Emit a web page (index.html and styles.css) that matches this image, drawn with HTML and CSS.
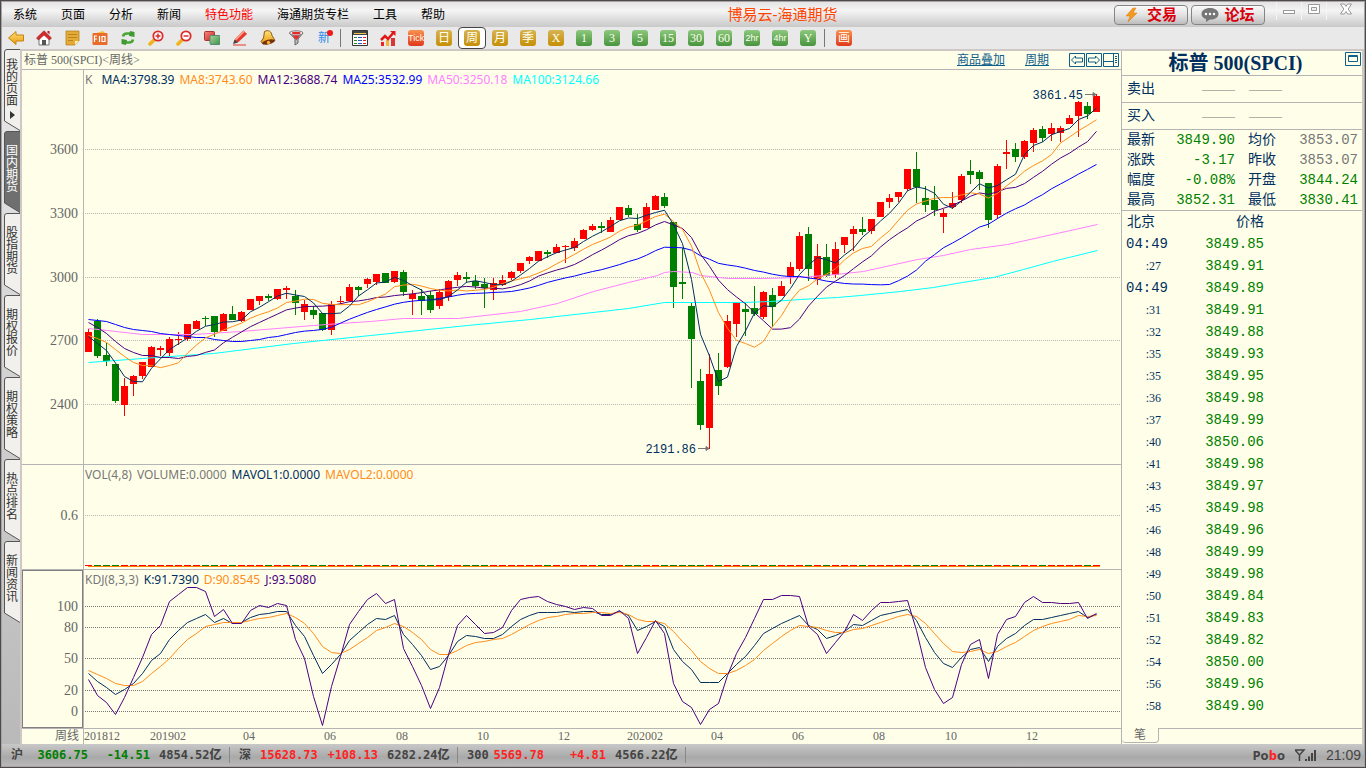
FILE: index.html
```html
<!DOCTYPE html>
<html lang="zh-CN">
<head>
<meta charset="utf-8">
<title>博易云-海通期货</title>
<link rel="stylesheet" href="styles.css">
</head>
<body>
<svg class="defs" aria-hidden="true">
  <symbol id="tab-shape" viewBox="0 0 16 82"><path d="M16 .5H3Q.5 .5 .5 3V72L16 81.5"/></symbol>
  <linearGradient id="gold" x1="0" y1="0" x2="0" y2="1"><stop offset="0" stop-color="#ffe27a"/><stop offset="1" stop-color="#e8980c"/></linearGradient>
  <linearGradient id="redg" x1="0" y1="0" x2="1" y2="1"><stop offset="0" stop-color="#f58a80"/><stop offset="1" stop-color="#c61f1c"/></linearGradient>
  <linearGradient id="greeng" x1="0" y1="0" x2="1" y2="1"><stop offset="0" stop-color="#a5d69c"/><stop offset="1" stop-color="#3f8f45"/></linearGradient>
</svg>
<div class="window">
  <header class="titlebar">
    <nav class="menu">
      <button>系统</button><button>页面</button><button>分析</button><button>新闻</button><button class="hot">特色功能</button><button>海通期货专栏</button><button>工具</button><button>帮助</button>
    </nav>
    <h1 class="app-title">博易云-海通期货</h1>
    <div class="actions">
      <button class="action"><svg width="14" height="16" viewBox="0 0 14 16"><path d="M8 1 1 9h4l-2 6 9-9H8l3-5z" fill="#f39a1e" stroke="#d87a10" stroke-width=".5"/></svg>交易</button>
      <button class="action"><svg width="18" height="14" viewBox="0 0 18 14"><path d="M9 0c5 0 8.500 2.500 8.500 6S14 11.500 9 11.500L5 14V11C2 10 .5 8.500 .5 6 .5 2.500 4 0 9 0z" fill="#777"/><g fill="#fff"><circle cx="5" cy="6" r="1.200"/><circle cx="9" cy="6" r="1.200"/><circle cx="13" cy="6" r="1.200"/></g></svg>论坛</button>
    </div>
    <div class="win-controls">
      <button aria-label="最小化"><svg width="14" height="12" viewBox="0 0 14 12"><rect x="1.500" y="7.500" width="11" height="3"/></svg></button>
      <button aria-label="还原"><svg width="14" height="12" viewBox="0 0 14 12"><path d="M1.500 1.500h11v9h-11zM4.500 4.500v3h5v-3z" fill-rule="evenodd"/></svg></button>
      <button class="close" aria-label="关闭"><svg width="14" height="12" viewBox="0 0 14 12"><path d="M1.500 1h4L7 3.500 8.500 1h4L9.200 6l3.300 5h-4L7 8.500 5.500 11h-4L4.800 6z"/></svg></button>
    </div>
  </header>

  <div class="toolbar">
    <button aria-label="后退"><svg viewBox="0 0 16 16"><path d="M.5 8 8 1.500V5h7.500v6H8v3.500z" fill="url(#gold)" stroke="#c88208"/></svg></button>
    <button aria-label="首页"><svg viewBox="0 0 16 16"><path d="M3 7v8h10V7L8 3z" fill="#fff" stroke="#777"/><path d="M.5 8 8 .8 15.500 8l-2 2L8 5 2.500 10z" fill="#d42b2b" stroke="#9c1818" stroke-width=".6"/><path d="M11.500 1h2v3.500l-2-2z" fill="#b32020"/><path d="M6 10h4v5H6z" fill="#555"/></svg></button>
    <button aria-label="便签"><svg viewBox="0 0 16 16"><path d="M2 1h13v10l-4 4H2z" fill="#e5ab36" stroke="#b07c14" stroke-width=".7"/><path d="M4 4.500h9M4 7.500h9M4 10.500h5" stroke="#b98420" fill="none"/><path d="M15 11h-4v4z" fill="#fff0b8"/></svg></button>
    <button aria-label="F10"><svg viewBox="0 0 16 16"><path d="m1 4 10-3 3 3z" fill="#f6bd3e"/><rect x=".5" y="3" width="15" height="12" rx="1" fill="#e96c2b"/><path d="M2.500 12V6H5M2.500 9H5M7.500 6v6M10 6.500h3v5h-3z" stroke="#fff" fill="none" stroke-width="1.200"/></svg></button>
    <button aria-label="刷新"><svg viewBox="0 0 16 16" fill="none" stroke="#4ba535" stroke-width="2.600"><path d="M3 6.500Q3.500 3.500 7 3.500h4"/><path d="M13 9.500Q12.500 12.500 9 12.500H5"/><path d="m10 1 4.500 1v5L9 6zM6 15l-4.500-1V9L7 10z" fill="#3f9a30" stroke="none"/></svg></button>
    <button aria-label="放大"><svg viewBox="0 0 16 16"><path d="m2 14 4.500-4.500" stroke="#f2b21b" stroke-width="3.500" stroke-linecap="round"/><circle cx="10" cy="6" r="4.700" fill="#fff" stroke="#db2c2c" stroke-width="1.800"/><path d="M7.500 6h5M10 3.500v5" stroke="#db2c2c" stroke-width="1.500"/></svg></button>
    <button aria-label="缩小"><svg viewBox="0 0 16 16"><path d="m2 14 4.500-4.500" stroke="#f2b21b" stroke-width="3.500" stroke-linecap="round"/><circle cx="10" cy="6" r="4.700" fill="#fff" stroke="#db2c2c" stroke-width="1.800"/><path d="M7.500 6h5" stroke="#db2c2c" stroke-width="1.500"/></svg></button>
    <button aria-label="叠加"><svg viewBox="0 0 16 16"><rect x=".5" y="1.500" width="10" height="9" rx="1" fill="url(#redg)" stroke="#a33"/><rect x="6" y="5.500" width="10" height="9" rx="1" fill="url(#greeng)" stroke="#587"/></svg></button>
    <button aria-label="画笔"><svg viewBox="0 0 16 16"><path d="M11.500 .5 15 4l-8.500 8-4 1 .5-4z" fill="#e5382d"/><path d="m11.500 .5 1.200 1.500L4 10.500 3 9z" fill="#ff9b8a"/><path d="m2.500 9.500 3.500 3L1 14z" fill="#444"/><path d="M1 15h13" stroke="#e5382d"/></svg></button>
    <button aria-label="预警"><svg viewBox="0 0 16 16"><path d="M4.500 1.500c4-2 7 0 7.500 4l3 5L3 14 1 11.500 3.500 8z" fill="url(#gold)" stroke="#8f5a10"/><ellipse cx="8.500" cy="12" rx="6.500" ry="2.200" transform="rotate(-14 8.500 12)" fill="#77300f"/><circle cx="8.500" cy="12.500" r="1.700" fill="#f5b52f"/></svg></button>
    <button aria-label="筛选"><svg viewBox="0 0 16 16"><path d="M1.500 3 7 9v6l3-2V9l5-6z" fill="#bbb" stroke="#666"/><ellipse cx="8.200" cy="3" rx="6.700" ry="2.200" fill="#fff" stroke="#777"/><ellipse cx="8.200" cy="3" rx="4.500" ry="1.300" fill="#e42b2b"/><path d="m4.500 5.500 4 4.500 3.500-4.500z" fill="#e42b2b"/></svg></button>
    <button class="new" aria-label="新功能">新</button>
    <span class="sep"></span>
    <button aria-label="报价表"><svg viewBox="0 0 16 16"><path d="M.5 .5h15v15H.5z" fill="#fff" stroke="#333"/><path d="M1 1h14v4H1z" fill="#444"/><path d="M2 3.500h12" stroke="#e6c84a"/><path d="M2 7.500h3M2 10.500h3M2 13.500h3" stroke="#2a8a2a"/><path d="M6 7.500h4M6 10.500h4M6 13.500h4" stroke="#2a53b8"/><path d="M11 7.500h3M11 10.500h3M11 13.500h3" stroke="#d22"/></svg></button>
    <button aria-label="走势图"><svg viewBox="0 0 16 16"><path d="M1 12h3v4H1z" fill="#e22"/><path d="M6 10h3v6H6z" fill="#f0b43a"/><path d="M11 8h4v8h-4z" fill="#d33"/><path d="M1 10 5 6l3 3 6-7" fill="none" stroke="#e01818" stroke-width="2.500"/><path d="M10 1h5.500v5z" fill="#e01818"/></svg></button>
    <button><span class="chip red tiny">Tick</span></button>
    <button><span class="chip amber">日</span></button>
    <button class="selected" aria-pressed="true"><span class="chip amber">周</span></button>
    <button><span class="chip amber">月</span></button>
    <button><span class="chip amber">季</span></button>
    <button><span class="chip amber">X</span></button>
    <button><span class="chip green">1</span></button>
    <button><span class="chip green">3</span></button>
    <button><span class="chip green">5</span></button>
    <button><span class="chip green">15</span></button>
    <button><span class="chip green">30</span></button>
    <button><span class="chip green">60</span></button>
    <button><span class="chip green tiny">2hr</span></button>
    <button><span class="chip green tiny">4hr</span></button>
    <button><span class="chip green">Y</span></button>
    <span class="sep"></span>
    <button><span class="chip red">画</span></button>
  </div>

  <div class="workspace">
    <nav class="side-tabs">
      <button class="first"><svg><use href="#tab-shape"/></svg><span>我的页面</span><svg class="arrow" viewBox="0 0 5 8"><path d="M0 0v8l5-4z"/></svg></button>
      <button class="active"><svg><use href="#tab-shape"/></svg><span>国内期货</span></button>
      <button><svg><use href="#tab-shape"/></svg><span>股指期货</span></button>
      <button><svg><use href="#tab-shape"/></svg><span>期权报价</span></button>
      <button><svg><use href="#tab-shape"/></svg><span>期权策略</span></button>
      <button><svg><use href="#tab-shape"/></svg><span>热点排名</span></button>
      <button><svg><use href="#tab-shape"/></svg><span>新闻资讯</span></button>
    </nav>

    <main class="content">
      <section class="charts">
        <div class="chart-head">
          <h2>标普 500(SPCI)&lt;周线&gt;</h2>
          <a href="#overlay">商品叠加</a>
          <a href="#period">周期</a>
          <div class="head-icons">
            <button aria-label="左移"><svg viewBox="0 0 16 14"><path d="M.5 .5h15v13H.5zM2.500 7 6.500 3v2h7v4h-7v2z"/></svg></button>
            <button aria-label="右移"><svg viewBox="0 0 16 14"><path d="M.5 .5h15v13H.5zM13.500 7 9.500 3v2h-7v4h7v2z"/></svg></button>
            <button aria-label="布局"><svg viewBox="0 0 16 14"><path d="M.5 .5h15v13H.5zM10.500 .5v13M.5 8.500h10M12 3.500h2M12 5.500h2M12 7.500h2M12 9.500h2"/></svg></button>
          </div>
        </div>

        <div class="pane">
          <svg class="axis" viewBox="22 70 61 394" preserveAspectRatio="none">
            <text x="78" y="154">3600</text><text x="78" y="218">3300</text><text x="78" y="282">3000</text><text x="78" y="345">2700</text><text x="78" y="409">2400</text>
          </svg>
          <div class="plot">
            <p class="legend"><span class="dim first-key">K</span><span class="navy">MA4:3798.39</span><span class="orange">MA8:3743.60</span><span class="indigo">MA12:3688.74</span><span class="blue">MA25:3532.99</span><span class="pink">MA50:3250.18</span><span class="cyan">MA100:3124.66</span></p>
            <svg id="k-chart" viewBox="84 70 1037 394" preserveAspectRatio="none">
              <path class="grid" d="M85 149.500H1121M85 213.500H1121M85 277.500H1121M85 340.500H1121M85 404.500H1121"/>
              <g id="candles"></g>
              <g id="averages" class="lines"></g>
              <text class="note" x="1083" y="99">3861.45</text>
              <path class="pointer" d="M1085 94.500h11m-3-2 3 2-3 2z"/>
              <text class="note" x="696" y="453">2191.86</text>
              <path class="pointer" d="M698 448.500h11m-3-2 3 2-3 2z"/>
            </svg>
          </div>
        </div>

        <div class="pane">
          <svg class="axis" viewBox="22 465 61 104" preserveAspectRatio="none"><text x="78" y="520">0.6</text></svg>
          <div class="plot">
            <p class="legend"><span class="dim">VOL(4,8)</span><span class="dim">VOLUME:0.0000</span><span class="navy">MAVOL1:0.0000</span><span class="orange">MAVOL2:0.0000</span></p>
            <svg viewBox="84 465 1037 104" preserveAspectRatio="none">
              <path class="grid" d="M85 515.500H1121"/>
              <g id="volumes"></g>
              <path d="M88 566.500H1100" stroke="#ff8000"/>
            </svg>
          </div>
        </div>

        <div class="pane">
          <svg class="axis" viewBox="22 570 61 158" preserveAspectRatio="none">
            <rect x="22.500" y="570.500" width="60" height="157"/>
            <text x="78" y="611">100</text><text x="78" y="632">80</text><text x="78" y="663">50</text><text x="78" y="695">20</text><text x="78" y="716">0</text>
          </svg>
          <div class="plot">
            <p class="legend"><span class="dim">KDJ(8,3,3)</span><span class="navy">K:91.7390</span><span class="orange">D:90.8545</span><span class="indigo">J:93.5080</span></p>
            <svg viewBox="84 570 1037 158" preserveAspectRatio="none">
              <path class="grid dark" d="M85 606.500H1121M85 627.500H1121M85 658.500H1121M85 690.500H1121M85 711.500H1121"/>
              <g id="kdj" class="lines"></g>
            </svg>
          </div>
        </div>

        <div class="dates">
          <span class="period">周线</span>
          <svg viewBox="84 729 1037 15" preserveAspectRatio="none">
            <text x="84" y="740">201812</text><text x="150" y="740">201902</text><text x="243" y="740">04</text><text x="324" y="740">06</text><text x="396" y="740">08</text><text x="477" y="740">10</text><text x="558" y="740">12</text><text x="627" y="740">202002</text><text x="711" y="740">04</text><text x="792" y="740">06</text><text x="873" y="740">08</text><text x="945" y="740">10</text><text x="1026" y="740">12</text>
          </svg>
        </div>
      </section>

      <aside class="quote">
        <div class="quote-title">
          <h2>标普 500(SPCI)</h2>
          <button aria-label="最大化"><svg viewBox="0 0 16 14"><path d="M.5 .5h15v13H.5zM3.500 3.500h9v6h-9zM3 4.500h10"/></svg></button>
        </div>
        <div class="book"><span>卖出</span><span class="none">———</span><span class="none">———</span></div>
        <div class="book"><span>买入</span><span class="none">———</span><span class="none">———</span></div>
        <table class="facts">
          <tr><th>最新</th><td>3849.90</td><th>均价</th><td class="flat">3853.07</td></tr>
          <tr><th>涨跌</th><td>-3.17</td><th>昨收</th><td class="flat">3853.07</td></tr>
          <tr><th>幅度</th><td>-0.08%</td><th>开盘</th><td>3844.24</td></tr>
          <tr><th>最高</th><td>3852.31</td><th>最低</th><td>3830.41</td></tr>
        </table>
        <table class="ticks">
          <thead><tr><th>北京</th><th>价格</th><th></th></tr></thead>
          <tbody>
            <tr><td>04:49</td><td>3849.85</td><td></td></tr>
            <tr><td class="sec">:27</td><td>3849.91</td><td></td></tr>
            <tr><td>04:49</td><td>3849.89</td><td></td></tr>
            <tr><td class="sec">:31</td><td>3849.91</td><td></td></tr>
            <tr><td class="sec">:32</td><td>3849.88</td><td></td></tr>
            <tr><td class="sec">:35</td><td>3849.93</td><td></td></tr>
            <tr><td class="sec">:35</td><td>3849.95</td><td></td></tr>
            <tr><td class="sec">:36</td><td>3849.98</td><td></td></tr>
            <tr><td class="sec">:37</td><td>3849.99</td><td></td></tr>
            <tr><td class="sec">:40</td><td>3850.06</td><td></td></tr>
            <tr><td class="sec">:41</td><td>3849.98</td><td></td></tr>
            <tr><td class="sec">:43</td><td>3849.97</td><td></td></tr>
            <tr><td class="sec">:45</td><td>3849.98</td><td></td></tr>
            <tr><td class="sec">:46</td><td>3849.96</td><td></td></tr>
            <tr><td class="sec">:48</td><td>3849.99</td><td></td></tr>
            <tr><td class="sec">:49</td><td>3849.98</td><td></td></tr>
            <tr><td class="sec">:50</td><td>3849.84</td><td></td></tr>
            <tr><td class="sec">:51</td><td>3849.83</td><td></td></tr>
            <tr><td class="sec">:52</td><td>3849.82</td><td></td></tr>
            <tr><td class="sec">:54</td><td>3850.00</td><td></td></tr>
            <tr><td class="sec">:56</td><td>3849.96</td><td></td></tr>
            <tr><td class="sec">:58</td><td>3849.90</td><td></td></tr>
          </tbody>
        </table>
        <div class="quote-tabs"><button>笔</button><span></span></div>
      </aside>
    </main>
  </div>

  <footer class="status">
    <div class="index"><span>沪</span><b class="down">3606.75</b><b class="down">-14.51</b><b class="amount">4854.52亿</b></div>
    <div class="index"><span>深</span><b class="up">15628.73</b><b class="up">+108.13</b><b class="amount">6282.24亿</b></div>
    <div class="index"><span>300</span><b class="up">5569.78</b><b class="up">+4.81</b><b class="amount">4566.22亿</b></div>
    <div class="right">
      <strong class="brand">Po<em>b</em>o</strong>
      <svg width="21" height="12" viewBox="0 0 21 12" fill="none" stroke="#444"><path d="M0 1h9L4.500 6zM4.500 6v6" stroke-width="1.500"/><path d="M11 10v2M14 7.500V12M17 4v8M20 1v11" stroke-width="2"/></svg>
      <time>21:09</time>
    </div>
  </footer>
</div>
<script src="chart.js"></script>
</body>
</html>
```

FILE: styles.css
```css
:root {
  --cjk: "Noto Sans CJK SC";
  --paper: #ffffe9;
  --rule: #b4b4b4;
  --navy: #002f5f;
  --green: #008000;
  --link: #10608c;
}

* { box-sizing: border-box; }

body {
  margin: 0;
  font: 12px/16px "Liberation Sans", var(--cjk), sans-serif;
  color: #000;
}

button { margin: 0; padding: 0; border: 0; background: none; font: inherit; color: inherit; }
h1, h2, p { margin: 0; font-weight: normal; }
svg { display: block; }
.defs { position: absolute; width: 0; height: 0; }

.window {
  display: flex;
  flex-direction: column;
  height: 100vh;
  min-height: 700px;
  padding: 1px;
  border: 1px solid #4c494b;
  background: #a8a4a6;
}

/* title bar */
.titlebar {
  display: flex;
  align-items: center;
  height: 25px;
  flex: none;
  background: linear-gradient(#e4e4e4, #f4f4f4 35%, #c9c9c9);
}
.menu { display: flex; gap: 24px; padding-left: 11px; white-space: nowrap; }
.menu .hot { color: #f00; }
.app-title { flex: 1; padding-left: 6px; text-align: center; font-size: 15px; line-height: 20px; color: #ff4500; }
.actions { display: flex; gap: 3px; }
.action {
  display: flex;
  align-items: center;
  justify-content: center;
  gap: 8px;
  width: 74px;
  height: 20px;
  border: 1px solid #858585;
  border-radius: 4px;
  background: linear-gradient(#fafafa, #e3e3e3 50%, #bdbdbd);
  color: #d9000c;
  font-size: 15px;
  font-weight: bold;
}
.action:last-child { gap: 5px; }
.win-controls { display: flex; padding-left: 11px; height: 100%; }
.win-controls button { display: flex; justify-content: center; width: 25px; height: 18px; padding-top: 1px; border-left: 1px solid #f4f4f4; }
.win-controls .close { width: 38px; }
.win-controls svg { fill: #fff; stroke: #999; }

/* toolbar */
.toolbar { display: flex; flex: none; height: 22px; background: #e9e9e9; }
.toolbar button { display: flex; align-items: center; justify-content: center; width: 28px; height: 22px; }
.toolbar button > svg { width: 16px; height: 16px; }
.toolbar .selected { border: 1px solid #444; border-radius: 4px; background: #fff; }
.toolbar .new { position: relative; color: #2f8bea; }
.toolbar .new::after { content: ""; position: absolute; right: 5px; top: 3px; width: 6px; height: 6px; border-radius: 50%; background: #f01818; }
.sep { width: 1px; margin: 2px 5px 2px 2px; background: #777; }
.chip {
  display: block;
  width: 16px;
  height: 16px;
  border-radius: 3px;
  overflow: hidden;
  color: #fffff0;
  text-align: center;
  font: 12px/16px "Liberation Serif", var(--cjk), serif;
}
.chip.tiny { font: 9px/16px "Liberation Sans", sans-serif; }
.chip.amber { background: linear-gradient(#d6b352, #c68f05); }
.chip.green { background: linear-gradient(#8cc87c, #49943e); }
.chip.red { background: linear-gradient(#f7924f, #e0391c); }

/* workspace */
.workspace { display: grid; grid-template-columns: 18px 1fr; flex: 1; min-height: 0; background: linear-gradient(#e9e9e9, #b9b9b9); }
.side-tabs { padding-left: 2px; }
.side-tabs button {
  position: relative;
  display: flex;
  flex-direction: column;
  align-items: center;
  width: 16px;
  height: 82px;
  padding-top: 14px;
  color: #333;
}
.side-tabs span { width: 12px; line-height: 12px; overflow-wrap: anywhere; position: relative; }
.side-tabs button > svg:first-child { position: absolute; inset: 0; width: 16px; height: 82px; fill: #f1f0ec; stroke: #555; }
.side-tabs .first { padding-top: 10px; }
.side-tabs .arrow { position: relative; width: 5px; height: 8px; margin-top: 4px; fill: #333; }
.side-tabs .active { color: #fff; }
.side-tabs .active > svg:first-child { fill: #6f6f6f; }

.content {
  display: grid;
  grid-template-columns: 1fr 241px;
  min-width: 0;
  border: solid #cfc6c6;
  border-width: 2px 2px 0;
  background: var(--paper);
}

/* charts */
.charts { display: grid; grid-template-rows: 19px 395fr 105fr 159fr 15px; min-width: 0; }
.chart-head { display: flex; align-items: center; border-bottom: 1px solid var(--rule); padding: 0 2px; }
.chart-head h2 { flex: 1; font: 12px/16px "Liberation Serif", var(--cjk), serif; color: #666; }
.chart-head a { margin-right: 20px; color: var(--link); line-height: 16px; }
.head-icons { display: flex; gap: 1px; }
.head-icons svg, .quote-title svg { width: 16px; height: 14px; fill: none; stroke: var(--link); }

.pane { display: grid; grid-template-columns: 62px 1fr; grid-template-rows: minmax(0, 1fr); min-height: 0; border-bottom: 1px solid var(--rule); }
.axis { width: 100%; height: 100%; border-right: 1px solid var(--rule); }
.axis text { font: 14px "Liberation Serif", serif; fill: #666; text-anchor: end; }
.axis rect { fill: none; stroke: #808080; }
.plot { position: relative; min-width: 0; min-height: 0; }
.plot > svg { width: 100%; height: 100%; }
.legend { position: absolute; left: 1px; top: 2px; display: flex; gap: 5px; font: 12px/16px "Noto Sans", sans-serif; white-space: nowrap; }
.first-key { margin-right: 4px; }
.dim { color: #777; }
.navy { color: var(--navy); }
.orange { color: #ff8c1a; }
.indigo { color: #4b0082; }
.blue { color: #00f; }
.pink { color: #ff80ff; }
.cyan { color: #0ff; }
.grid { stroke: #b8b8b0; stroke-dasharray: 1 1; shape-rendering: crispEdges; }
.grid.dark { stroke: #777; }
.lines polyline { fill: none; stroke: currentColor; }
.note { font: 12px "Liberation Mono", monospace; fill: var(--navy); text-anchor: end; }
.pointer { fill: #777; stroke: #777; }
.rise { fill: #f00; shape-rendering: crispEdges; }
.fall { fill: var(--green); shape-rendering: crispEdges; }

.dates { display: grid; grid-template-columns: 62px 1fr; color: #666; }
.period { border-right: 1px solid var(--rule); padding-right: 4px; text-align: right; line-height: 14px; }
.dates svg { width: 100%; height: 15px; }
.dates text { font: 12px "Liberation Serif", serif; fill: #666; }

/* quote panel */
.quote { display: flex; flex-direction: column; border-left: 1px solid var(--rule); color: var(--navy); font: 14px/20px "Liberation Serif", var(--cjk), serif; }
.quote-title { display: flex; height: 25px; border-bottom: 1px solid var(--rule); }
.quote-title h2 { flex: 1; padding-left: 4px; text-align: center; font-size: 20px; line-height: 24px; font-weight: bold; }
.quote-title button { width: 17px; padding-top: 1px; align-self: flex-start; }
.book { display: flex; align-items: center; height: 27px; padding-left: 5px; border-bottom: 1px solid var(--rule); }
.book span:first-child { width: 75px; }
.book .none { width: 47px; font-size: 11px; color: #777; }
.quote table { width: 100%; table-layout: fixed; border-collapse: collapse; }
.quote th { padding: 0; font-weight: normal; text-align: left; }
.quote td { padding: 0; text-align: right; font-family: "Liberation Mono", monospace; font-size: 14px; color: var(--green); }
.facts { border-bottom: 1px solid var(--rule); }
.facts th:first-child { width: 42px; padding-left: 5px; }
.facts td:nth-child(2) { width: 71px; }
.facts th:nth-child(3) { width: 55px; padding-left: 13px; }
.facts td:nth-child(4) { padding-right: 4px; }
.facts td.flat { color: #777; }
.ticks th { height: 22px; }
.ticks th:first-child { width: 46px; padding-left: 5px; }
.ticks th:nth-child(2) { width: 96px; text-align: right; }
.ticks td { height: 22px; }
.ticks td:first-child { color: var(--navy); }
.ticks td.sec { padding-right: 7px; font-family: "Liberation Serif", serif; font-size: 12px; }
.quote-tabs { display: flex; height: 16px; margin-top: auto; }
.quote-tabs button { width: 37px; height: 15px; border: solid var(--rule); border-width: 0 1px 1px 0; border-radius: 0 0 4px 4px; font-size: 12px; line-height: 14px; color: #666; }
.quote-tabs span { flex: 1; border-top: 1px solid var(--rule); }

/* status bar */
.status {
  display: flex;
  align-items: center;
  flex: none;
  height: 22px;
  padding: 0 3px 0 9px;
  background: linear-gradient(#c8c8c8, #a9a9a9 60%, #b9b9b9);
  color: #444;
  font: bold 12px/16px "DejaVu Sans Mono", var(--cjk), monospace;
  white-space: nowrap;
}
.index { display: grid; grid-template-columns: 21px 56px 62px 80px; margin-right: 9px; height: 16px; }
.index b { text-align: right; }
.index .amount { margin-left: 9px; padding-right: 9px; text-align: left; border-right: 1px solid #888; }
.down { color: var(--green); }
.up { color: #f22; }
.right { display: flex; align-items: center; gap: 10px; margin-left: auto; }
.brand { font: bold 13px/16px "Open Sans", sans-serif; }
.brand em { font-style: normal; color: #f22; }
.right time { font: 14px/16px "Liberation Sans", sans-serif; }
```

FILE: chart.js
```js
// One entry per week: direction (1 up, 0 down), high, low, body top, body bottom.
const weeks = [
  [1,329,352,332,352],[0,319,358,321,356],[0,343,366,355,361],[0,364,403,364,401],[1,378,416,386,405],
  [1,375,396,376,384],[1,362,379,362,376],[1,346,367,347,367],[1,346,356,348,350],[1,337,356,339,353],
  [1,332,345,339,340],[1,324,341,324,339],[1,320,329,321,329],[0,316,326,318,319],[0,316,337,316,332],
  [1,313,331,314,331],[0,306,320,314,320],[1,311,322,312,321],[1,299,310,299,310],[1,296,305,296,301],
  [0,294,301,296,298],[1,289,300,289,299],[1,286,299,288,290],[0,290,315,296,303],[1,300,320,304,312],
  [0,306,319,310,315],[0,313,331,313,330],[1,301,335,304,330],[1,296,304,301,302],[1,284,302,287,301],
  [0,286,296,287,290],[1,278,288,279,284],[1,274,285,274,282],[0,273,283,273,283],[1,271,283,271,282],
  [0,270,296,272,292],[1,290,315,294,299],[0,289,315,296,301],[0,291,313,295,310],[1,289,309,292,306],
  [1,280,301,281,297],[1,272,286,275,280],[0,272,283,277,279],[0,275,289,281,286],[0,278,308,284,288],
  [1,278,300,283,290],[1,275,286,280,285],[1,271,280,272,278],[1,263,273,263,271],[1,256,264,257,261],
  [1,251,261,251,261],[0,250,258,252,254],[1,244,253,247,253],[1,245,263,246,247],[1,238,251,241,248],
  [1,229,239,230,239],[1,224,231,226,230],[0,222,233,226,228],[1,217,232,220,232],[1,207,220,207,220],
  [0,205,217,208,215],[0,214,232,224,230],[1,203,228,207,228],[1,195,210,196,210],[0,193,208,197,206],
  [0,222,308,222,287],[0,248,299,282,284],[0,302,388,306,339],[0,369,430,381,425],[1,354,449,374,428],
  [0,353,395,370,386],[1,315,368,321,367],[1,303,337,303,324],[0,303,336,309,312],[0,286,316,308,314],
  [1,291,319,292,317],[0,288,327,295,307],[1,281,296,286,296],[1,262,284,267,276],[1,232,271,236,269],
  [0,227,281,234,269],[1,244,285,256,279],[0,244,277,257,276],[1,242,278,249,275],[1,237,253,237,245],
  [1,226,251,229,234],[0,217,235,229,232],[1,219,234,219,231],[1,202,217,202,217],[1,194,208,198,202],
  [1,192,202,192,197],[1,169,191,169,189],[0,152,203,169,187],[0,186,212,198,205],[0,186,216,200,210],
  [1,209,233,213,217],[1,192,209,203,207],[1,174,203,176,200],[0,160,184,171,175],[0,170,190,172,179],
  [0,183,228,183,220],[1,164,219,166,215],[1,140,169,152,154],[0,143,162,149,157],[1,140,159,141,157],
  [1,128,152,130,143],[0,126,142,129,138],[1,123,141,128,134],[1,126,142,128,133],[1,115,124,118,124],
  [1,101,137,102,116],[0,102,119,106,114],[1,94,112,96,112]
];

const NS = "http://www.w3.org/2000/svg";
const xAt = i => 88 + 9 * i;

function add(parentId, tag, attrs) {
  const el = document.createElementNS(NS, tag);
  for (const name in attrs) el.setAttribute(name, attrs[name]);
  document.getElementById(parentId).appendChild(el);
}

function line(parentId, cls, points) {
  add(parentId, "polyline", {
    class: cls,
    points: points.map(([x, y]) => `${x + 0.5},${y + 0.5}`).join(" ")
  });
}

weeks.forEach(([up, high, low, top, bottom], i) => {
  const cls = up ? "rise" : "fall";
  add("candles", "rect", { class: cls, x: xAt(i), y: high, width: 1, height: low - high });
  add("candles", "rect", { class: cls, x: xAt(i) - 3, y: top, width: 7, height: bottom - top });
  add("volumes", "rect", { class: cls, x: xAt(i) - 3, y: 565, width: 7, height: 1 });
});

// Moving average of the closes; lead holds the values before the first full window.
const closes = weeks.map(w => (w[0] ? w[3] : w[4]));
function average(n, lead) {
  return closes.map((_, i) => {
    if (i < lead.length) return [xAt(i), lead[i]];
    const part = closes.slice(i - n + 1, i + 1);
    return [xAt(i), part.reduce((a, b) => a + b, 0) / n];
  });
}

line("averages", "cyan", [[88,362],[142,358],[213,353],[293,343],[370,335],[467,325],[530,319],[628,308],[664,302],[743,302],[770,301],[800,299],[837,297],[860,295],[900,291],[933,287],[962,282],[993,277],[1023,269],[1052,261],[1097,250]]);
line("averages", "pink", [[88,328],[107,330],[142,334],[193,334],[240,331],[313,325],[340,323],[370,321],[403,318],[458,318],[520,311],[557,303],[593,291],[628,282],[657,275],[664,272],[673,271],[692,272],[700,275],[728,278],[763,278],[800,277],[835,274],[863,271],[917,259],[943,255],[970,249],[1007,244],[1097,224]]);
line("averages", "blue", average(25, [319,320,321,324,327,329,330,331,333,334,335,336,337,337,339,340,341,341,340,339,337,336,334,332]));
line("averages", "indigo", average(12, [322,327,333,341,348,352,355,355,357,357,358]));
line("averages", "orange", average(8, [335,338,342,349,356,362,365]));
line("averages", "navy", average(4, [336,343,350]));

const k = [673,681,687,694,689,683,673,660,653,639,630,622,618,614,622,618,623,622,617,614,613,611,611,625,636,655,673,664,654,640,632,624,618,619,615,634,644,655,669,666,655,641,635,636,638,638,634,626,619,615,612,612,612,611,612,611,611,614,614,611,615,630,626,621,626,649,661,669,682,682,682,673,664,656,645,633,628,623,619,615,625,629,638,635,631,624,625,620,615,613,611,609,620,637,652,663,667,657,649,647,661,646,638,633,625,619,619,617,615,613,611,617,614];
const d = [670,674,678,683,685,685,681,673,666,658,648,639,633,626,624,622,622,622,620,618,617,615,613,617,623,633,646,652,653,649,643,637,630,627,623,626,632,639,649,654,654,650,645,642,641,639,638,634,629,624,620,617,616,614,613,613,612,612,613,612,614,619,621,621,623,631,641,650,661,668,673,673,670,665,659,650,643,636,630,625,626,627,630,632,632,629,628,625,622,619,616,614,616,623,633,643,651,652,651,649,653,651,646,642,636,630,626,623,621,619,615,616,615];
const j = [679,695,702,714,697,677,657,634,625,601,594,587,587,591,616,609,623,623,610,605,607,603,605,639,658,696,725,686,656,624,611,599,593,603,599,648,666,685,708,687,654,625,615,624,633,632,627,610,599,597,596,601,604,606,609,607,608,615,615,610,618,653,637,620,633,683,701,707,724,709,703,675,653,637,618,599,599,595,595,596,626,634,653,642,631,614,620,610,602,602,601,600,630,667,689,703,697,664,644,639,678,634,619,616,602,596,602,602,603,603,602,618,613];
const series = values => values.map((y, i) => [xAt(i), y]);
line("kdj", "navy", series(k));
line("kdj", "orange", series(d));
line("kdj", "indigo", series(j));
```
